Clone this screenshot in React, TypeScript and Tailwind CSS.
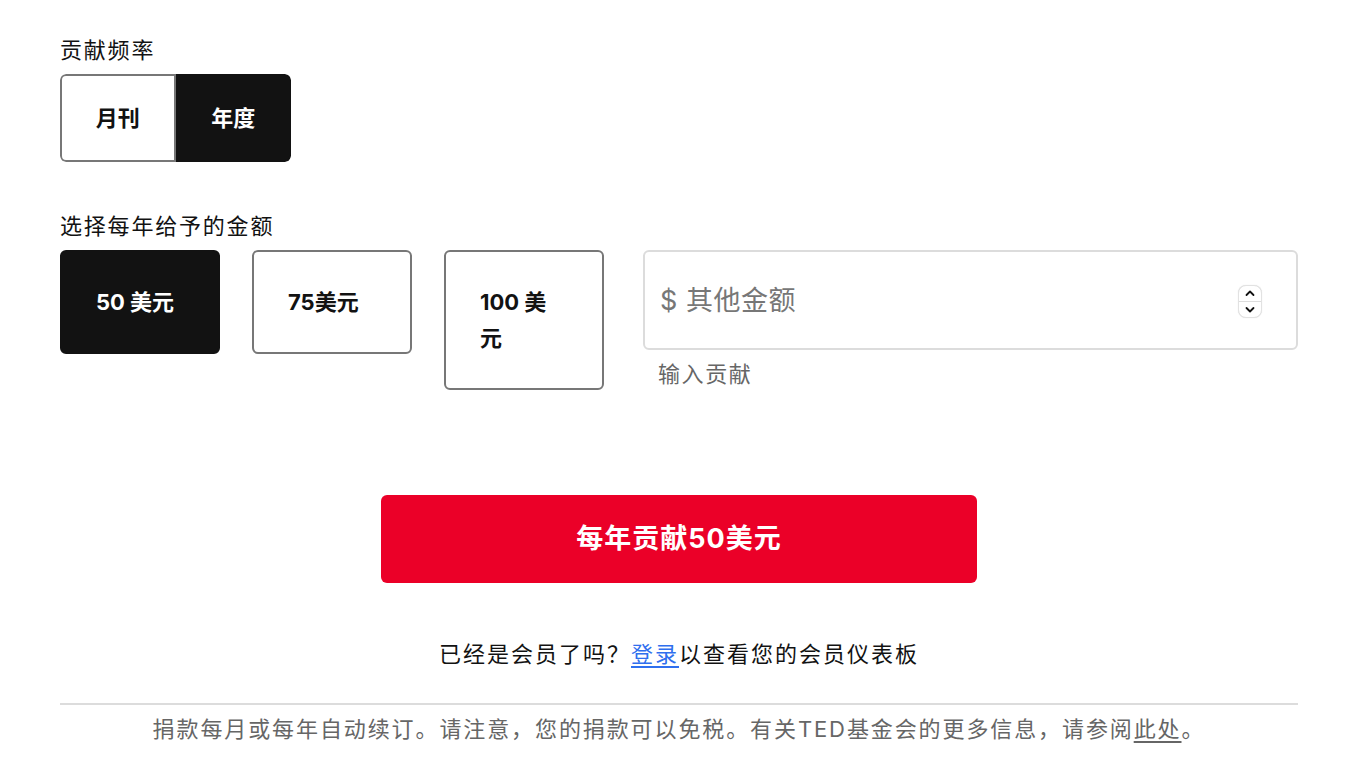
import { useState } from 'react'

const font = '[font-family:Inter,"Noto_Sans_CJK_SC",sans-serif]'

const amounts = ['50 美元', '75美元', '100 美元']

const Spinner = () => (
  <div className="absolute right-[36px] top-[35px] flex h-[33px] w-[24px] flex-col items-center justify-between rounded-[8px] border border-[#e2e2e2] bg-white py-[3px] shadow-[0_0_1px_rgba(0,0,0,0.15)]">
    <svg width="10" height="8" viewBox="0 0 10 8" fill="none">
      <path d="M1.5 6L5 2.5L8.5 6" stroke="#111" strokeWidth="1.8" strokeLinecap="round" strokeLinejoin="round" />
    </svg>
    <div className="h-px w-full bg-[#ddd]" />
    <svg width="10" height="8" viewBox="0 0 10 8" fill="none">
      <path d="M1.5 2L5 5.5L8.5 2" stroke="#111" strokeWidth="1.8" strokeLinecap="round" strokeLinejoin="round" />
    </svg>
  </div>
)

export default function App() {
  const [frequency, setFrequency] = useState('year')
  const [amount, setAmount] = useState(0)

  return (
    <div className={`${font} min-h-[774px] bg-white pl-[60px] pr-[64px] pt-[36px] text-[#121212]`}>
      <div className="text-[22px] leading-[28px] tracking-[1.8px]">贡献频率</div>
      <div className="mt-[10px] flex h-[88px] w-[231px] overflow-hidden rounded-[6px]">
        <button
          type="button"
          onClick={() => setFrequency('month')}
          className={`flex-1 rounded-l-[6px] border-2 text-[22px] font-bold ${
            frequency === 'month' ? 'border-[#121212] bg-[#121212] text-white' : 'border-[#777] bg-white'
          }`}
        >
          月刊
        </button>
        <button
          type="button"
          onClick={() => setFrequency('year')}
          className={`flex-1 rounded-r-[6px] border-2 text-[22px] font-bold ${
            frequency === 'year' ? 'border-[#121212] bg-[#121212] text-white' : 'border-[#777] bg-white'
          }`}
        >
          年度
        </button>
      </div>

      <div className="mt-[50px] text-[22px] leading-[28px] tracking-[1.8px]">选择每年给予的金额</div>
      <div className="mt-[10px] flex items-start">
        <div className="flex items-start gap-[32px]">
          {amounts.map((label, idx) => (
            <button
              key={label}
              type="button"
              onClick={() => setAmount(idx)}
              className={`w-[160px] rounded-[6px] border-2 px-[34px] py-[32px] text-left text-[22px] font-bold leading-[36px] ${
                amount === idx ? 'border-[#121212] bg-[#121212] text-white' : 'border-[#777] bg-white'
              } ${idx === 2 ? '' : 'text-center'}`}
            >
              {label}
            </button>
          ))}
        </div>
        <div className="ml-[39px] flex-1">
          <div className="relative">
            <input
              type="text"
              placeholder="$ 其他金额"
              className="h-[100px] w-full rounded-[6px] border-2 border-[#dcdcdc] px-[15px] text-[27px] tracking-[0.5px] outline-none placeholder:text-[#777]"
            />
            <Spinner />
          </div>
          <div className="mt-[10px] pl-[15px] text-[22px] leading-[28px] tracking-[1.6px] text-[#666]">输入贡献</div>
        </div>
      </div>

      <div className="mt-[105px] flex justify-center">
        <button
          type="button"
          className="h-[88px] w-[596px] rounded-[6px] bg-[#eb0028] text-[27px] font-bold tracking-[1px] text-white"
        >
          每年贡献50美元
        </button>
      </div>

      <div className="mt-[57px] text-center text-[22px] leading-[28px] tracking-[2px]">
        已经是会员了吗？
        <a href="#" className="text-[#2f6fee] underline underline-offset-4">
          登录
        </a>
        以查看您的会员仪表板
      </div>

      <div className="mt-[35px] h-[2px] bg-[#dcdcdc]" />
      <div className="mt-[10px] text-center text-[22px] leading-[28px] tracking-[1.9px] text-[#666]">
        捐款每月或每年自动续订。请注意，您的捐款可以免税。有关TED基金会的更多信息，请参阅
        <a href="#" className="text-[#666] underline underline-offset-4">
          此处
        </a>
        。
      </div>
    </div>
  )
}
